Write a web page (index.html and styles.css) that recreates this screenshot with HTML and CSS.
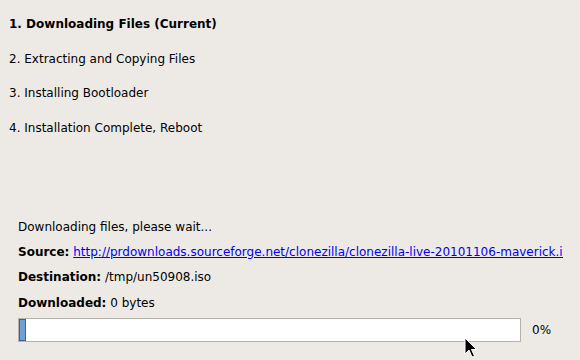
FILE: index.html
```html
<!DOCTYPE html>
<html lang="en">
<head>
  <meta charset="UTF-8">
  <title>Downloading Files</title>
  <link rel="stylesheet" href="styles.css">
</head>
<body>
  <div class="page">
    <ol class="steps">
      <li class="current">1. Downloading Files (Current)</li>
      <li>2. Extracting and Copying Files</li>
      <li>3. Installing Bootloader</li>
      <li>4. Installation Complete, Reboot</li>
    </ol>

    <div class="details">
      <div class="line">Downloading files, please wait...</div>
      <div class="line"><b>Source:</b> <a href="#">http://prdownloads.sourceforge.net/clonezilla/clonezilla-live-20101106-maverick.iso</a></div>
      <div class="line"><b>Destination:</b> /tmp/un50908.iso</div>
      <div class="line"><b>Downloaded:</b> 0 bytes</div>
      <div class="progress-row">
        <div class="progress">
          <div class="progress-fill"></div>
        </div>
        <span class="percent">0%</span>
      </div>
    </div>
  </div>

  <svg class="cursor" width="14" height="22" viewBox="0 0 14 22">
    <path d="M1 1 L1 17 L5 13 L8 20 L10.5 19 L7.5 12.5 L12.5 12.5 Z" fill="#000" stroke="#fff" stroke-width="1"/>
  </svg>
</body>
</html>
```

FILE: styles.css
```css
* {
  margin: 0;
  padding: 0;
  box-sizing: border-box;
}

body {
  font-family: 'DejaVu Sans', Verdana, sans-serif;
  font-size: 12px;
  line-height: 14px;
  color: #000;
  background: #edeae6;
  width: 580px;
  height: 360px;
  overflow: hidden;
  position: relative;
}

.page {
  height: 360px;
  display: flex;
  flex-direction: column;
}

.steps {
  list-style: none;
  padding: 17px 0 0 9px;
  display: flex;
  flex-direction: column;
  gap: 20.7px;
}

.steps .current {
  font-weight: bold;
}

.details {
  margin-top: auto;
  padding: 0 17px 18px 18px;
  display: flex;
  flex-direction: column;
  gap: 11.3px;
}

.line {
  white-space: nowrap;
  overflow: hidden;
}

.line a {
  color: #0000ee;
  text-decoration: underline;
}

.progress-row {
  display: flex;
  align-items: center;
  gap: 11px;
  margin-top: -3px;
}

.progress {
  width: 503px;
  height: 24px;
  background: #fff;
  border: 1px solid #b5b1ab;
  position: relative;
}

.progress-fill {
  width: 7px;
  height: 100%;
  background: #6f9fd3;
  border: 1px solid #3d628f;
}

.percent {
  font-size: 12px;
}

.cursor {
  position: absolute;
  left: 464px;
  top: 337px;
}
```
